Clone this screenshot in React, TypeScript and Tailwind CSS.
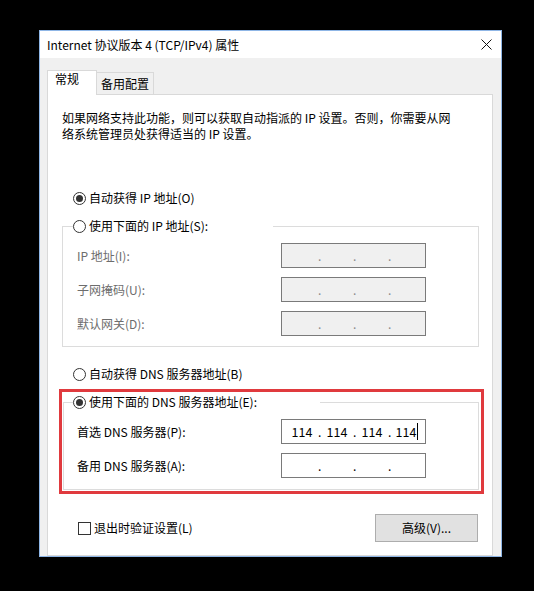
import React from 'react'

const FONT = { fontFamily: '"Noto Sans CJK SC", "Noto Sans", sans-serif' }

function Radio({ checked = false }: { checked?: boolean }) {
  return (
    <span className="w-[13px] h-[13px] rounded-full border border-[#333333] bg-white flex items-center justify-center flex-shrink-0">
      {checked && <span className="w-[7px] h-[7px] rounded-full bg-[#333333]" />}
    </span>
  )
}

function RadioRow({ label, checked = false }: { label: string; checked?: boolean }) {
  return (
    <div className="flex items-center h-[16px] gap-[3px]">
      <Radio checked={checked} />
      <span className="leading-[16px]">{label}</span>
    </div>
  )
}

// four-octet address box, dots sit between fixed-width segments
function IpBox({ octets, disabled = false, caret = false }: { octets?: string[]; disabled?: boolean; caret?: boolean }) {
  const parts = octets ?? ['', '', '', '']
  return (
    <div
      className={`h-[25px] w-[145px] border border-[#7a7a7a] flex items-center pl-[4px] ${
        disabled ? 'bg-[#f0f0f0] text-[#8a8a8a]' : 'bg-white text-black'
      }`}
    >
      {parts.map((p, i) => (
        <React.Fragment key={i}>
          <span className="w-[32px] text-center text-[12.5px] leading-[16px] flex items-center justify-center">
            {p}
            {caret && i === 3 && <span className="inline-block w-px h-[17px] bg-black ml-[1px]" />}
          </span>
          {i < 3 && <span className="w-[3px] text-center leading-[16px]">.</span>}
        </React.Fragment>
      ))}
    </div>
  )
}

export default function App() {
  return (
    <div className="w-[534px] h-[591px] bg-black pt-[30px] pl-[39px] text-[12px] text-black" style={FONT}>
      <div className="w-[463px] h-[527px] border border-[#8fb6e6] bg-[#f0f0f0] flex flex-col overflow-hidden">
        {/* title bar */}
        <div className="h-[27px] bg-white flex items-center justify-between pl-[7px] pr-[9px]">
          <span className="leading-[16px]">Internet 协议版本 4 (TCP/IPv4) 属性</span>
          <svg width="11" height="11" viewBox="0 0 11 11">
            <path d="M0.5 0.5 L10.5 10.5 M10.5 0.5 L0.5 10.5" stroke="#111" strokeWidth="1" />
          </svg>
        </div>

        <div className="flex-1 flex flex-col pl-[7px] pt-[12px] min-h-0">
          {/* tabs */}
          <div className="flex items-end h-[24px]">
            <div className="relative z-10 w-[50px] h-[25px] -mb-px bg-white border border-[#d9d9d9] border-b-0 pl-[7px] leading-[15px]">
              常规
            </div>
            <div className="w-[57px] h-[22px] border border-[#d9d9d9] border-b-0 border-l-0 flex items-center pl-[4px] bg-[#f0f0f0]">
              备用配置
            </div>
          </div>

          <div className="w-[446px] flex-1 bg-white border border-[#d9d9d9] px-[14px] pt-[15px] overflow-hidden">
            <div className="leading-[16px]">
              <div>如果网络支持此功能，则可以获取自动指派的 IP 设置。否则，你需要从网</div>
              <div>络系统管理员处获得适当的 IP 设置。</div>
            </div>

            <div className="mt-[48px] ml-[11px]">
              <RadioRow label="自动获得 IP 地址(O)" checked />
            </div>

            <fieldset className="mt-[12px] w-[417px] border border-[#dcdcdc] m-0 pl-[10px] pr-0 pt-[9px] pb-[10px]">
              <legend className="w-[200px] p-0">
                <RadioRow label="使用下面的 IP 地址(S):" />
              </legend>
              <div className="grid grid-cols-[204px_145px] gap-y-[9px] pl-[4px] text-[#6d6d6d]">
                <span className="h-[25px] flex items-center">IP 地址(I):</span>
                <IpBox disabled />
                <span className="h-[25px] flex items-center">子网掩码(U):</span>
                <IpBox disabled />
                <span className="h-[25px] flex items-center">默认网关(D):</span>
                <IpBox disabled />
              </div>
            </fieldset>

            <div className="mt-[19px] ml-[11px]">
              <RadioRow label="自动获得 DNS 服务器地址(B)" />
            </div>

            <div className="mt-[7px] -ml-[3px] w-[425px] border-[3px] border-[#e03a3e] pt-[2px] pb-[1px]">
              <fieldset className="ml-[1px] w-[416px] border border-[#dcdcdc] m-0 pl-[9px] pr-0 pt-[9px] pb-[11px]">
                <legend className="w-[247px] p-0">
                  <RadioRow label="使用下面的 DNS 服务器地址(E):" checked />
                </legend>
                <div className="grid grid-cols-[204px_145px] gap-y-[9px] pl-[4px]">
                  <span className="h-[25px] flex items-center">首选 DNS 服务器(P):</span>
                  <IpBox octets={['114', '114', '114', '114']} caret />
                  <span className="h-[25px] flex items-center">备用 DNS 服务器(A):</span>
                  <IpBox />
                </div>
              </fieldset>
            </div>

            <div className="mt-[20px] h-[28px] flex items-center justify-between">
              <label className="ml-[16px] flex items-center gap-[3px]">
                <span className="w-[13px] h-[13px] border border-[#333333] bg-white" />
                <span className="leading-[16px]">退出时验证设置(L)</span>
              </label>
              <button className="w-[103px] h-[28px] bg-[#e1e1e1] border border-[#adadad] leading-[16px]">
                高级(V)...
              </button>
            </div>
          </div>
        </div>
      </div>
    </div>
  )
}
